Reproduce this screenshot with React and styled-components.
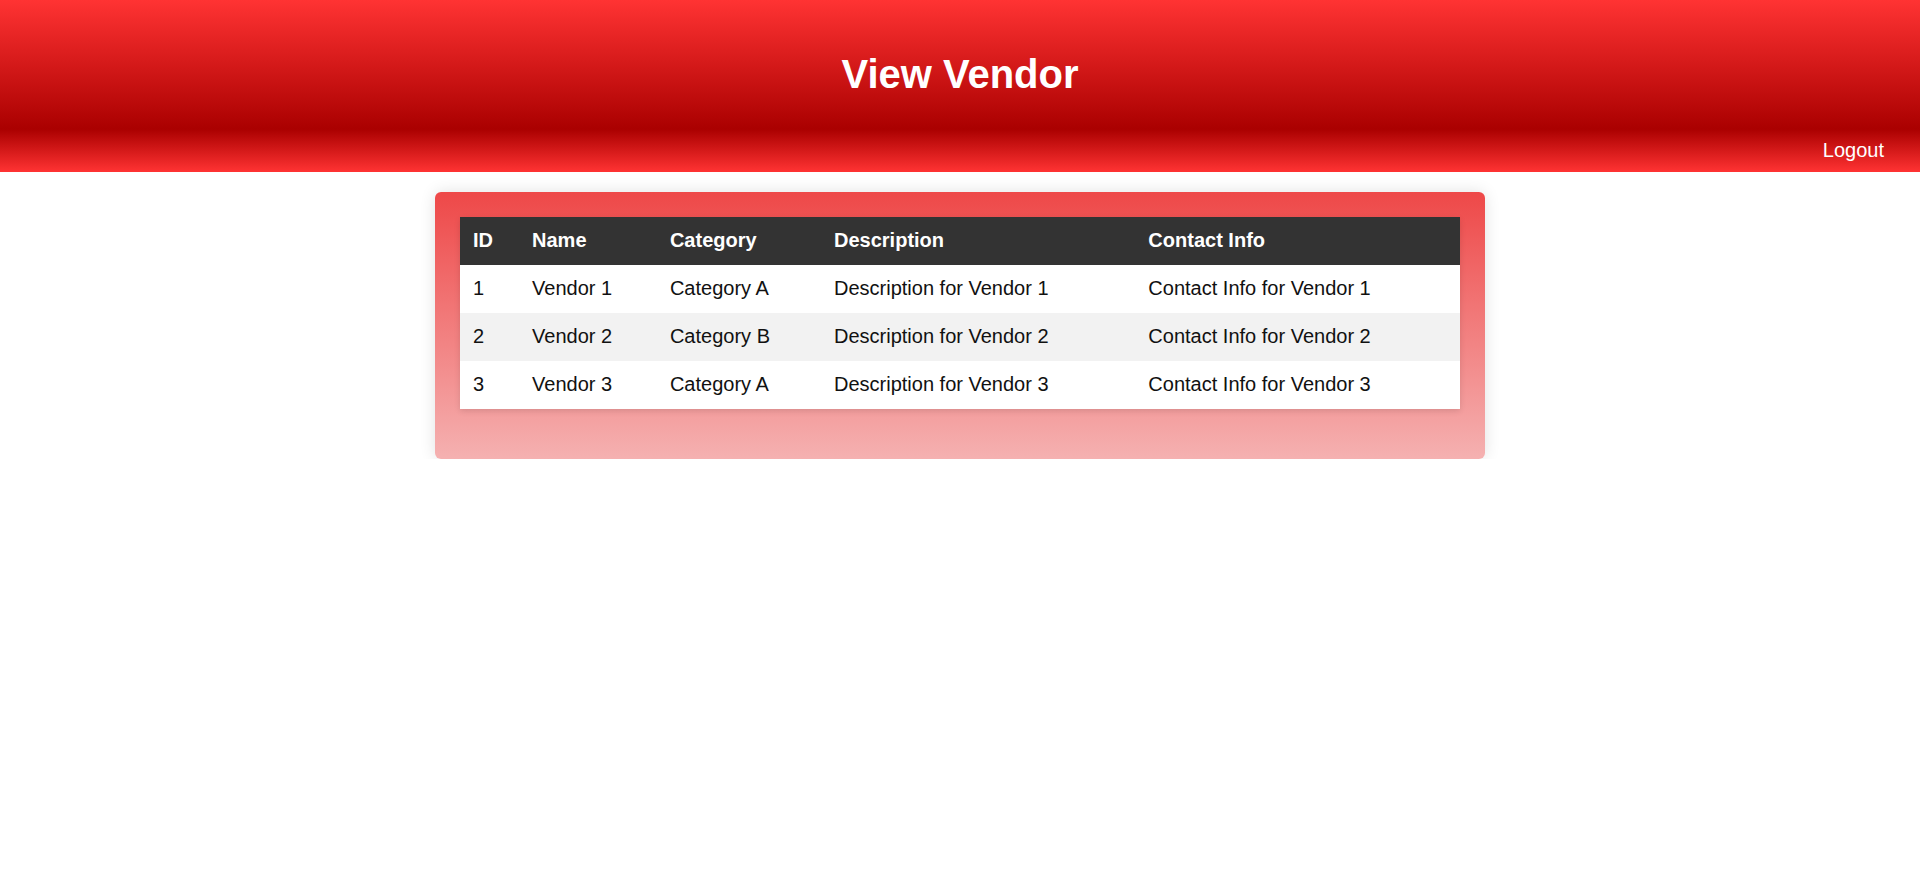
import React from "react";
import styled, { createGlobalStyle } from "styled-components";

const vendors = [
  { id: 1, name: "Vendor 1", category: "Category A", description: "Description for Vendor 1", contact: "Contact Info for Vendor 1" },
  { id: 2, name: "Vendor 2", category: "Category B", description: "Description for Vendor 2", contact: "Contact Info for Vendor 2" },
  { id: 3, name: "Vendor 3", category: "Category A", description: "Description for Vendor 3", contact: "Contact Info for Vendor 3" },
];

const GlobalStyle = createGlobalStyle`
  body {
    margin: 0;
    background: #fff;
    font-family: "Liberation Sans", Arial, sans-serif;
  }
`;

const App = () => {
  return (
    <>
      <GlobalStyle />
      <Header>
        <Title>View Vendor</Title>
        <Nav>
          <NavLink href="#">Logout</NavLink>
        </Nav>
      </Header>

      <Card>
        <Table>
          <thead>
            <tr>
              <Th>ID</Th>
              <Th>Name</Th>
              <Th>Category</Th>
              <Th>Description</Th>
              <Th>Contact Info</Th>
            </tr>
          </thead>
          <tbody>
            {vendors.map(v => (
              <Row key={v.id}>
                <Td>{v.id}</Td>
                <Td>{v.name}</Td>
                <Td>{v.category}</Td>
                <Td>{v.description}</Td>
                <Td>{v.contact}</Td>
              </Row>
            ))}
          </tbody>
        </Table>
      </Card>
    </>
  );
};

export default App;

const Header = styled.header`
  display: flex;
  flex-direction: column;
  height: 172px;
  box-sizing: border-box;
  padding: 51px 36px 11px;
  background: linear-gradient(to bottom, #ff3333 0%, #aa0000 75%, #ff3333 100%);
  color: #fff;
`;

const Title = styled.h1`
  margin: 0;
  text-align: center;
  font-size: 40px;
  line-height: 46px;
  font-weight: 700;
`;

const Nav = styled.nav`
  display: flex;
  justify-content: flex-end;
  margin-top: 42px;
`;

const NavLink = styled.a`
  color: #fff;
  text-decoration: none;
  font-size: 20px;
  line-height: 23px;
`;

const Card = styled.div`
  width: 1000px;
  margin: 20px auto 0;
  padding: 25px 25px 50px;
  border-radius: 6px;
  background: linear-gradient(to bottom, #ee4848 0%, #f5b1b1 100%);
  box-shadow: 0 0 16px rgba(0, 0, 0, 0.12);
`;

const Table = styled.table`
  width: 100%;
  border-collapse: collapse;
  background: #fff;
  box-shadow: 0 2px 6px rgba(0, 0, 0, 0.12);
`;

const Th = styled.th`
  background: #333;
  color: #fff;
  text-align: left;
  font-weight: 700;
  font-size: 20px;
  line-height: 24px;
  padding: 11px 12px 13px 13px;
`;

const Row = styled.tr`
  &:nth-child(even) {
    background: #f2f2f2;
  }
`;

const Td = styled.td`
  color: #111;
  font-size: 20px;
  line-height: 24px;
  padding: 11px 12px 13px 13px;
`;
